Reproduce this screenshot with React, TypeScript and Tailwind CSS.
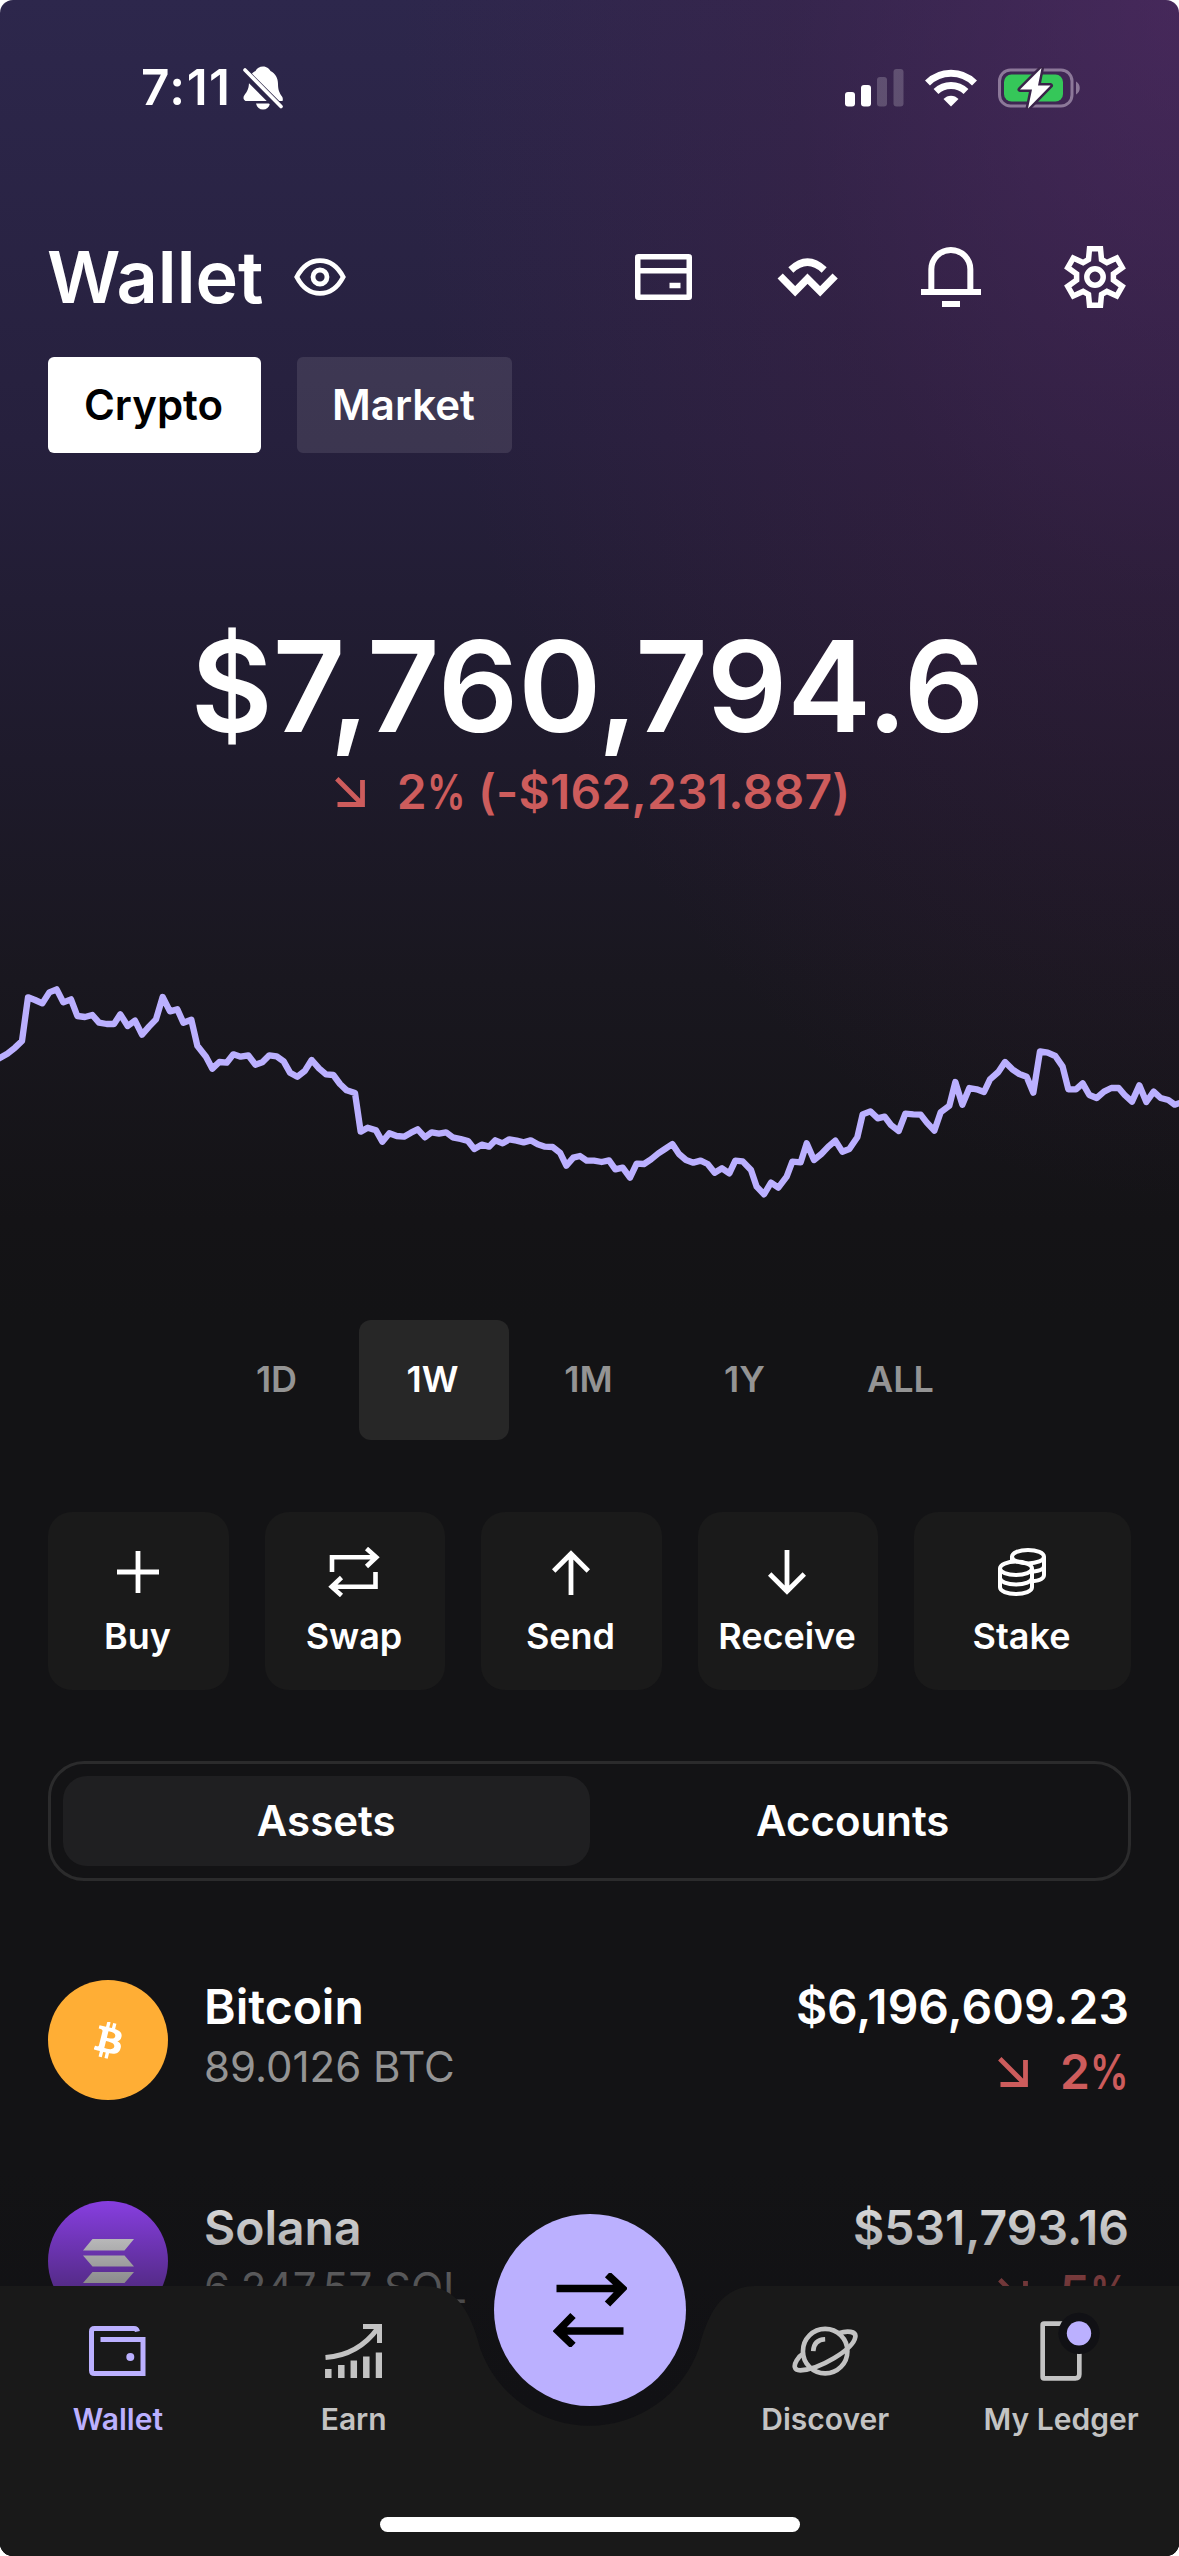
import type { ReactNode } from "react";

const chartPoints =
  "-6,297 22,281 45,263 66,243 84,112 105,120 127,130 148,97 170,88 190,127 213,118 232,168 255,171 277,165 297,188 320,192 342,192 361,163 383,198 405,182 426,224 447,200 468,178 488,111 510,154 532,148 550,188 574,179 592,257 618,290 637,326 658,306 680,308 700,283 722,290 745,286 766,314 787,307 808,286 830,289 851,304 870,338 892,350 915,332 935,300 957,325 978,343 1000,345 1020,372 1040,391 1065,399 1082,515 1103,503 1128,511 1147,545 1168,520 1190,528 1212,530 1233,518 1253,508 1275,532 1295,517 1317,521 1338,517 1358,532 1382,537 1404,543 1423,567 1445,554 1467,560 1486,541 1508,550 1528,538 1550,542 1571,547 1592,541 1613,553 1635,560 1658,561 1680,578 1699,617 1720,593 1740,588 1760,602 1782,602 1805,606 1827,601 1846,628 1868,623 1890,653 1910,611 1932,612 1953,598 1975,580 1995,567 2017,552 2037,582 2058,600 2080,608 2102,602 2123,612 2144,638 2166,625 2188,640 2206,602 2228,604 2253,630 2270,680 2292,703 2313,668 2335,683 2360,650 2377,605 2402,607 2420,550 2442,600 2464,582 2485,560 2506,542 2527,575 2548,567 2572,532 2588,463 2611,454 2633,475 2654,470 2673,495 2696,513 2716,461 2740,463 2762,464 2780,487 2803,512 2822,457 2848,437 2866,366 2887,434 2908,384 2930,388 2952,396 2970,358 2995,336 3015,306 3037,328 3058,342 3080,350 3100,398 3120,274 3143,278 3166,288 3188,320 3205,388 3228,388 3248,370 3268,405 3290,414 3312,395 3334,384 3356,384 3374,405 3396,425 3418,376 3439,426 3461,395 3482,414 3505,420 3524,434 3545,427";

const periods = ["1D", "1W", "1M", "1Y", "ALL"];

const StatusBar = () => {
  return (
    <div className="h-[176px] pl-[141px] pr-[98px] flex items-center justify-between">
      <div className="flex items-center gap-[11px]">
        <div className="text-[49.5px] leading-none font-semibold tracking-[1.5px]">
          7:11
        </div>
        <svg width="40" height="44" viewBox="0 0 40 44" fill="white">
          <path d="M20 0.5c4 0 6.5 2.5 7.5 4.5c5 2.5 7.5 7 7.5 13c0 6 1.500 9 4 12.500c1 1.500 1 3 0.500 4.500H2.500c-2.500 -1.500 -2.500 -4 -1 -6c3 -4 4.500 -7 4.500 -13c0 -5.500 2.500 -9 6.500 -11c1.500 -3 4 -4.500 7.500 -4.500z" />
          <path d="M13 37.500h14c-1 4 -3.500 6 -7 6s-6 -2 -7 -6z" />
          <path d="M-1 4L40 45" stroke="#2c2548" strokeWidth="9" />
          <path
            d="M2 4L38 40.500"
            stroke="white"
            strokeWidth="3.600"
            strokeLinecap="round"
          />
        </svg>
      </div>
      <div className="flex items-center">
        <svg width="59" height="38" viewBox="0 0 59 38" fill="white">
          <rect x="0" y="23" width="10" height="14.500" rx="3" />
          <rect x="16" y="16" width="10" height="21.500" rx="3" />
          <rect x="32" y="8" width="10" height="29.500" rx="3" opacity="0.200" />
          <rect x="48.500" y="0" width="10" height="37.500" rx="3" opacity="0.200" />
        </svg>
        <svg
          className="ml-[21px]"
          width="52"
          height="38"
          viewBox="0 0 52 38"
          fill="none"
          stroke="white"
        >
          <path d="M2.500 14C15.500 1 36.500 1 49.500 14" strokeWidth="7" />
          <path d="M11 22.500C19.500 14.500 32.500 14.500 41 22.500" strokeWidth="7" />
          <path d="M18.500 30C22.500 25.500 29.500 25.500 33.500 30L26 37.500z" fill="white" stroke="none" />
        </svg>
        <svg
          className="ml-[21px]"
          width="83"
          height="42"
          viewBox="0 0 83 42"
          fill="none"
        >
          <rect
            x="1.500"
            y="3"
            width="72.500"
            height="36"
            rx="11"
            stroke="#8c7899"
            strokeWidth="3"
          />
          <path d="M78 14.500c5 2.500 5 10.500 0 13z" fill="#8c7899" />
          <rect x="6" y="7.500" width="59" height="27" rx="7.500" fill="#35c759" />
          <path
            d="M43.500 1L22 22.500h12L30 41.500L52.500 18.500H40z"
            fill="white"
            stroke="#3a2449"
            strokeWidth="5"
            strokeLinejoin="round"
            paintOrder="stroke"
          />
        </svg>
      </div>
    </div>
  );
};

const Header = () => {
  return (
    <div className="mt-[41px] h-[120px] pl-[47px] pr-[53px] flex items-center justify-between">
      <div className="flex items-center gap-[30px]">
        <div className="text-[72px] leading-none font-semibold">Wallet</div>
        <svg
          width="52"
          height="38"
          viewBox="0 0 52 38"
          fill="none"
          stroke="white"
          strokeWidth="4.800"
        >
          <path d="M2.800 19C8 9 16 2.600 26 2.600S44 9 49.200 19C44 29 36 35.400 26 35.400S8 29 2.800 19z" />
          <circle cx="26" cy="19" r="7" />
        </svg>
      </div>
      <div className="flex items-center">
        <svg width="57" height="46" viewBox="0 0 57 46" fill="none">
          <rect
            x="2.750"
            y="2.750"
            width="51.500"
            height="40.500"
            rx="0.500"
            stroke="white"
            strokeWidth="5.500"
            strokeLinejoin="round"
          />
          <path d="M3 16.800H54" stroke="white" strokeWidth="5.500" />
          <path d="M34.500 31.500H45.500" stroke="white" strokeWidth="5.500" />
        </svg>
        <svg
          className="ml-[85px]"
          width="61"
          height="40"
          viewBox="50 80 182 120"
          fill="none"
          stroke="white"
          strokeWidth="22"
        >
          <path d="M91 119Q141 72 191 119" />
          <path d="M59 137L104 183L141 145L179 183L224 137" />
        </svg>
        <svg
          className="ml-[82px]"
          width="62"
          height="62"
          viewBox="480 48 186 186"
          fill="none"
          stroke="white"
          strokeWidth="18"
        >
          <path d="M514 180V118a58.500 58 0 0 1 117 0V180" />
          <path d="M483 186H663M546 222H600" />
        </svg>
        <svg
          className="ml-[82px]"
          width="62"
          height="62"
          viewBox="-31 -31 62 62"
          fill="none"
          stroke="white"
          strokeWidth="5.500"
        >
          <path d="M-6.500 -17.500L-5.500 -28.300H5.500L6.500 -17.500L11.900 -14.400L21.760 -18.900L27.260 -9.400L18.400 -3.100V3.100L27.260 9.400L21.760 18.900L11.900 14.400L6.500 17.500L5.500 28.300H-5.500L-6.500 17.500L-11.900 14.400L-21.760 18.900L-27.260 9.400L-18.400 3.100V-3.100L-27.260 -9.400L-21.760 -18.900L-11.900 -14.400z" />
          <circle r="8.200" />
        </svg>
      </div>
    </div>
  );
};

const DownArrow = () => {
  return (
    <svg
      width="30"
      height="30"
      viewBox="0 0 30 30"
      fill="none"
      stroke="currentColor"
      strokeWidth="4.800"
    >
      <path d="M1.800 1.800L27 27M2.500 27.500H29.900M27.500 3V29.900" />
    </svg>
  );
};

// condensed percent sign
const Percent = () => {
  return (
    <span className="inline-block origin-left scale-x-[0.8] -mr-[9px]">%</span>
  );
};

const actions: { label: string; width: string; icon: ReactNode }[] = [
  {
    label: "Buy",
    width: "w-[181px]",
    icon: (
      <svg width="42" height="42" viewBox="0 0 42 42">
        <path d="M21 0V42M0 21H42" stroke="white" strokeWidth="4.800" />
      </svg>
    ),
  },
  {
    label: "Swap",
    width: "w-[180px]",
    icon: (
      <svg
        width="52"
        height="50"
        viewBox="0 0 52 50"
        fill="none"
        stroke="white"
        strokeWidth="4.600"
      >
        <path d="M4 25V10.300H48M38.500 1.500L48.300 10.300L38.500 19.500" />
        <path d="M47.500 25V39.700H4M13.500 30.500L3.700 39.700L13.500 48.500" />
      </svg>
    ),
  },
  {
    label: "Send",
    width: "w-[181px]",
    icon: (
      <svg
        width="38"
        height="45"
        viewBox="0 0 38 45"
        fill="none"
        stroke="white"
        strokeWidth="4.800"
      >
        <path d="M19 45V4M1.700 21L19 3.700L36.300 21" />
      </svg>
    ),
  },
  {
    label: "Receive",
    width: "w-[180px]",
    icon: (
      <svg
        width="38"
        height="45"
        viewBox="0 0 38 45"
        fill="none"
        stroke="white"
        strokeWidth="4.800"
      >
        <path d="M19 0V41M1.700 24L19 41.300L36.300 24" />
      </svg>
    ),
  },
  {
    label: "Stake",
    width: "w-[217px]",
    icon: (
      <svg
        width="48"
        height="48"
        viewBox="0 0 48 48"
        fill="none"
        stroke="white"
        strokeWidth="4"
      >
        <ellipse cx="30" cy="8.700" rx="16" ry="6.700" />
        <path d="M14 8V14M46 8.700V27C46 30.500 41.500 32.500 34.500 33.300M46 18C46 21 41.500 23 34 23.700" />
        <ellipse cx="18" cy="20.300" rx="16" ry="6.700" />
        <path d="M2 20.300V39.300C2 43 9.200 46 18 46S34 43 34 39.300V20.300" />
        <path d="M2 29.800C2 33.500 9.200 36.500 18 36.500S34 33.500 34 29.800" />
      </svg>
    ),
  },
];

const assets = [
  {
    name: "Bitcoin",
    amount: "89.0126 BTC",
    price: "$6,196,609.23",
    change: 2,
    color: "bg-[#ffae35]",
    icon: (
      <svg width="28" height="37" viewBox="6.100 4.400 11.300 15.100" fill="white">
        <path d="M17.288 10.291c.24-1.590-.974-2.450-2.640-3.030l.540-2.153-1.315-.330-.525 2.107c-.345-.087-.705-.167-1.064-.250l.526-2.127-1.320-.330-.540 2.165c-.285-.067-.565-.132-.840-.200l-1.815-.450-.350 1.407s.975.225.955.236c.535.136.630.486.615.766l-1.477 5.920c-.075.166-.240.406-.614.314.015.020-.960-.240-.960-.240l-.660 1.510 1.710.426.930.242-.540 2.190 1.320.327.540-2.170c.360.100.705.190 1.050.273l-.510 2.154 1.320.330.545-2.190c2.240.427 3.930.257 4.640-1.774.570-1.637-.030-2.580-1.217-3.196.854-.193 1.500-.760 1.680-1.930h.010zm-3.010 4.220c-.404 1.640-3.157.750-4.050.530l.720-2.900c.896.230 3.757.670 3.330 2.370zm.410-4.240c-.370 1.490-2.662.735-3.405.550l.654-2.640c.744.180 3.137.524 2.750 2.084v.006z" />
      </svg>
    ),
  },
  {
    name: "Solana",
    amount: "6,247.57 SOL",
    price: "$531,793.16",
    change: 5,
    color: "bg-[#9945ff]",
    icon: (
      <svg width="51" height="44" viewBox="0 0 51 44" fill="white">
        <path d="M9.500 0H51L41.500 11.500H0zM0 16.500H41.500L51 27.500H9.500zM9.500 33H51L41.500 44H0z" />
      </svg>
    ),
  },
];

const TabItem = ({
  label,
  color = "text-[#c3c3c3]",
  children,
}: {
  label: string;
  color?: string;
  children: ReactNode;
}) => {
  return (
    <div className={`flex flex-col items-center gap-[18px] ${color}`}>
      <div className="h-16 flex items-center">{children}</div>
      <div className="text-[30px] leading-9 font-semibold whitespace-nowrap">
        {label}
      </div>
    </div>
  );
};

const TabBar = () => {
  return (
    <div className="absolute inset-x-0 bottom-0 h-[386px]">
      <div className="absolute inset-0 bg-linear-to-b from-[#111114]/0 to-[#111114] to-60%" />
      <svg
        className="absolute bottom-0 left-0"
        width="1179"
        height="270"
        viewBox="0 0 1179 270"
        fill="#191919"
      >
        <path d="M0 0H424C456 0 471 26 480 62A116 116 0 0 0 699 62C708 26 723 0 755 0H1179V270H0z" />
      </svg>
      <div className="absolute inset-x-0 bottom-0 h-[270px] pt-[33px] grid grid-cols-5 content-start">
        <TabItem label="Wallet" color="text-[#bbb0ff]">
          <svg
            width="57"
            height="50"
            viewBox="0 0 57 50"
            fill="none"
            stroke="currentColor"
            strokeWidth="5"
          >
            <path d="M48.500 5.500C48 3.500 47 2.500 45 2.500H5.500Q2.500 2.500 2.500 5.500V44.500Q2.500 47.500 5.500 47.500H54V13.500H11.500" />
            <circle cx="41.300" cy="31" r="4" fill="currentColor" stroke="none" />
          </svg>
        </TabItem>
        <TabItem label="Earn">
          <svg
            width="57"
            height="54"
            viewBox="0 0 57 54"
            fill="none"
            stroke="currentColor"
          >
            <path
              d="M3.300 45V54M16.300 41V54M28.800 36.500V54M41.300 32.500V54M54 28.500V54"
              strokeWidth="6.500"
            />
            <path
              d="M0.500 33.500C22 32 40 22 53 4M38 2.500H54.500V19"
              strokeWidth="5"
            />
          </svg>
        </TabItem>
        <div />
        <TabItem label="Discover">
          <svg
            width="67"
            height="52"
            viewBox="185 75 202 155"
            fill="none"
            stroke="currentColor"
            strokeWidth="14"
          >
            <circle cx="285" cy="153" r="67" />
            <path d="M326 99C352 90 379 93 376 110C370 148 268 208 210 211C190 211 190 196 199 181C206 170 212 164 219 160" />
            <path d="M249 153C250 130 262 118 285 117" />
          </svg>
        </TabItem>
        <TabItem label="My Ledger">
          <svg
            className="overflow-visible"
            width="42"
            height="60"
            viewBox="930 62 126 180"
            fill="none"
          >
            <path
              d="M1000 70H942Q938 70 938 74V230Q938 234 942 234H1036Q1048 234 1048 222V150"
              stroke="currentColor"
              strokeWidth="14"
            />
            <circle cx="1047" cy="99" r="62" fill="#111115" />
            <circle cx="1047" cy="99" r="36.500" fill="#bbb0ff" />
          </svg>
        </TabItem>
      </div>
      <div className="absolute top-11 left-[494px] size-48 rounded-full bg-[#bbb0ff] flex items-center justify-center">
        <svg
          width="74"
          height="74"
          viewBox="0 0 74 74"
          fill="none"
          stroke="black"
          strokeWidth="7.500"
        >
          <path d="M3.500 15.500H71M54.500 1.500L69.500 15.500L54.500 31" />
          <path d="M70.500 58H4M20 42.500L5 58L20 72.500" />
        </svg>
      </div>
      <div className="absolute bottom-6 left-[380px] w-[420px] h-[15px] rounded-full bg-white" />
    </div>
  );
};

export default function App() {
  return (
    <div className="w-[1179px] h-[2556px] bg-white">
      <div className="relative size-full overflow-hidden rounded-[13px] bg-[#131315] bg-[radial-gradient(ellipse_780px_1200px_at_1179px_0px,rgba(100,42,108,0.45),rgba(84,32,80,0.22)_50%,transparent),linear-gradient(to_bottom,#2d274c_0px,#26203d_440px,#1e1a2b_760px,#19171f_980px,#141316_1220px,#131315_1320px)] font-['Inter',sans-serif] text-white">
        <StatusBar />
        <Header />

        <div className="mt-5 px-12 flex gap-9 text-[42px] leading-none font-semibold">
          <div className="w-[213px] h-24 pr-0.5 rounded-md bg-white text-black flex items-center justify-center">
            Crypto
          </div>
          <div className="w-[215px] h-24 pr-0.5 rounded-md bg-white/10 flex items-center justify-center">
            Market
          </div>
        </div>

        <div className="mt-[173px] h-[120px] pr-1 flex items-center justify-center text-[126px] leading-none font-semibold">
          $7,760,794.6
        </div>
        <div className="mt-[22px] h-12 pl-1.5 flex items-center justify-center gap-8 text-[48px] leading-none font-semibold text-[#cd5c5c]">
          <DownArrow />
          <div>
            2<Percent /> <span className="tracking-[0.2px]">(-$162,231.887)</span>
          </div>
        </div>

        <svg
          className="mt-36 block"
          width="1179"
          height="260"
          viewBox="0 0 3537 780"
          fill="none"
        >
          <polyline
            points={chartPoints}
            stroke="#bbb0ff"
            strokeWidth="19"
            strokeLinejoin="round"
          />
        </svg>

        <div className="mt-[100px] flex justify-center gap-1.5 text-[36px] leading-none font-semibold">
          {periods.map((period) => (
            <div
              key={period}
              className={`w-[150px] h-[120px] pr-0.5 pb-0.5 rounded-xl flex items-center justify-center ${
                period === "1W" ? "bg-[#272727]" : "text-[#949494]"
              }`}
            >
              {period}
            </div>
          ))}
        </div>

        <div className="mt-[72px] px-12 flex gap-9">
          {actions.map((action) => (
            <div
              key={action.label}
              className={`h-[178px] pt-[34px] pr-0.5 rounded-3xl bg-[#1a1a1a] flex flex-col items-center gap-[26px] ${action.width}`}
            >
              <div className="h-[52px] flex items-center">{action.icon}</div>
              <div className="h-[25px] text-[36px] leading-[25px] font-semibold">
                {action.label}
              </div>
            </div>
          ))}
        </div>

        <div className="mt-[71px] mx-12 h-[120px] p-3 border-[3px] border-[#2b2b2c] rounded-[36px] flex text-[42px] leading-none font-semibold">
          <div className="flex-1 rounded-3xl bg-[#1f1f21] flex items-center justify-center">
            Assets
          </div>
          <div className="flex-1 flex items-center justify-center">
            Accounts
          </div>
        </div>

        <div className="mt-[99px] pl-12 pr-[50px] flex flex-col gap-[101px]">
          {assets.map((asset) => (
            <div key={asset.name} className="h-[120px] flex items-start">
              <div
                className={`size-[120px] rounded-full flex items-center justify-center ${asset.color}`}
              >
                {asset.icon}
              </div>
              <div className="ml-9 pt-[3px]">
                <div className="text-[48px] leading-[48px] font-semibold">
                  {asset.name}
                </div>
                <div className="mt-3 text-[42px] leading-[48px] text-[#949494]">
                  {asset.amount}
                </div>
              </div>
              <div className="ml-auto pt-[3px] text-right text-[48px] leading-[48px] font-semibold">
                <div>{asset.price}</div>
                <div className="mt-[17px] flex items-center justify-end gap-8 text-[#cd5c5c]">
                  <DownArrow />
                  <div>
                    {asset.change}
                    <Percent />
                  </div>
                </div>
              </div>
            </div>
          ))}
        </div>

        <TabBar />
      </div>
    </div>
  );
}
